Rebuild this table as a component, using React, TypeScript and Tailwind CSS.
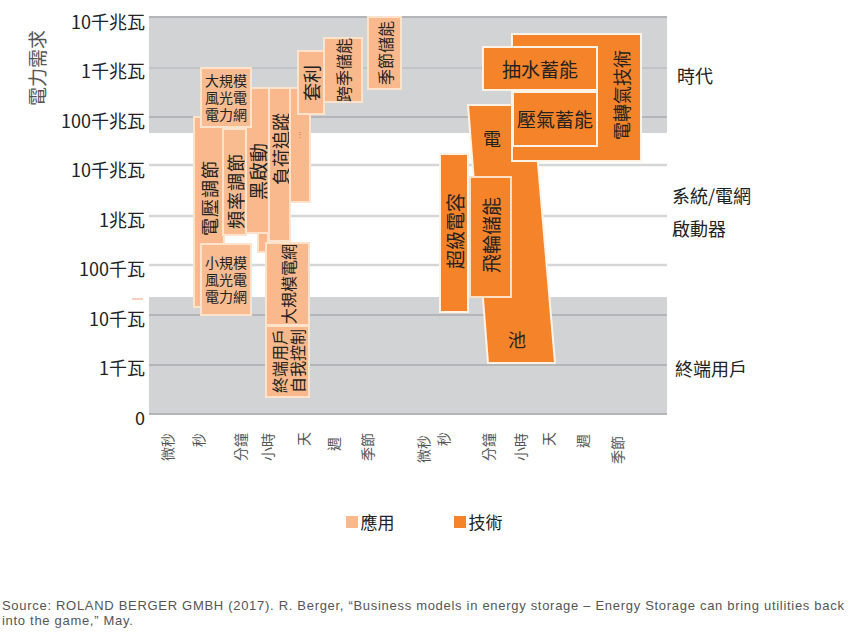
const side = "[writing-mode:vertical-rl] [text-orientation:sideways] rotate-180 whitespace-nowrap";

const yTicks = ["10千兆瓦", "1千兆瓦", "100千兆瓦", "10千兆瓦", "1兆瓦", "100千瓦", "10千瓦", "1千瓦", "0"];

export default function App() {
  return (
    <div className="w-[848px] h-[637px] bg-white flex flex-col font-['Noto_Sans_CJK_TC','Noto_Sans',sans-serif] text-[#222]">
      {/* Chart */}
      <div className="relative h-[500px] shrink-0">
        <svg className="absolute left-0 top-0" width="848" height="500">
          <rect x="149" y="16" width="518" height="117" fill="#d1d3d5" />
          <rect x="149" y="297" width="518" height="118" fill="#d1d3d5" />
          <line x1="149" y1="17" x2="667" y2="17" stroke="#a9abae" strokeWidth="1.5" />
          <line x1="149" y1="68" x2="667" y2="68" stroke="#b3b5b8" strokeWidth="1" />
          <line x1="149" y1="117" x2="667" y2="117" stroke="#a9abae" strokeWidth="1.5" />
          <line x1="149" y1="165" x2="667" y2="165" stroke="#d6d6d6" strokeWidth="2.5" />
          <line x1="149" y1="216" x2="667" y2="216" stroke="#d6d6d6" strokeWidth="2.5" />
          <line x1="149" y1="265" x2="667" y2="265" stroke="#d6d6d6" strokeWidth="2.5" />
          <line x1="149" y1="315" x2="667" y2="315" stroke="#a9abae" strokeWidth="1.5" />
          <line x1="149" y1="365" x2="667" y2="365" stroke="#a9abae" strokeWidth="1.5" />
          <line x1="149" y1="414" x2="667" y2="414" stroke="#a9abae" strokeWidth="1.5" />
          <line x1="132" y1="299" x2="143" y2="299" stroke="#f4a07a" strokeWidth="1" />
        </svg>

        {/* Y axis title */}
        <div className={`absolute left-[26px] top-[30px] text-[19px] leading-[22px] text-[#555] ${side}`}>電力需求</div>

        {/* Y axis labels */}
        <div className="absolute right-[703px] top-[-4px] flex flex-col items-end">
          {yTicks.map((t, i) => (
            <div key={i} className="h-[49.5px] flex items-center text-[18px] leading-[24px] whitespace-nowrap">
              {t}
            </div>
          ))}
        </div>

        {/* Right labels */}
        <div className="absolute left-[672px] top-[63px] flex flex-col text-[18px] leading-[24px]">
          <div className="pl-[5px]">時代</div>
          <div className="mt-[96px]">系統/電網</div>
          <div className="mt-[9px]">啟動器</div>
          <div className="mt-[116px] pl-[3px]">終端用戶</div>
        </div>

        {/* Application boxes */}
        <div className="absolute left-[193px] top-[116px] w-[32px] h-[192px] bg-[#f9b98c] border-2 border-[#fde2cc] flex flex-col items-center pt-[42px]">
          <span className={`text-[18px] leading-[20px] tracking-[1px] ${side}`}>電壓調節</span>
        </div>
        <div className="absolute left-[222px] top-[128px] w-[25px] h-[108px] bg-[#f9bb90] border-2 border-[#fde2cc] flex flex-col items-center pt-[23px]">
          <span className={`text-[18px] leading-[20px] tracking-[1px] ${side}`}>頻率調節</span>
        </div>
        <div className="absolute left-[257px] top-[150px] w-[12px] h-[103px] bg-[#f9b98c] border-2 border-[#fde2cc]" />
        <div className="absolute left-[245px] top-[87px] w-[25px] h-[147px] bg-[#f9b98c] border-2 border-[#fde2cc] flex flex-col items-center pt-[54px]">
          <span className={`text-[19px] leading-[21px] ${side}`}>黑啟動</span>
        </div>
        <div className="absolute left-[268px] top-[87px] w-[23px] h-[155px] bg-[#f9b98c] border-2 border-[#fde2cc] flex flex-col items-center pt-[24px]">
          <span className={`text-[18px] leading-[20px] ${side}`}>負荷追蹤</span>
        </div>
        <div className="absolute left-[289px] top-[87px] w-[22px] h-[116px] bg-[#f9b98c] border-2 border-[#fde2cc] flex flex-col items-center pt-[40px]">
          <span className="text-[8px] leading-[10px] text-[#c9734a]">⋮</span>
        </div>
        <div className="absolute left-[297px] top-[50px] w-[28px] h-[65px] bg-[#f9b98c] border-2 border-[#fde2cc] flex items-center justify-center">
          <span className={`text-[18px] leading-[20px] ${side}`}>套利</span>
        </div>
        <div className="absolute left-[323px] top-[37px] w-[40px] h-[66px] bg-[#f9b98c] border-2 border-[#fde2cc] flex items-center justify-center">
          <span className={`text-[16px] leading-[18px] ${side}`}>跨季儲能</span>
        </div>
        <div className="absolute left-[367px] top-[16px] w-[35px] h-[74px] bg-[#f9b98c] border-2 border-[#fde2cc] flex items-center justify-center">
          <span className={`text-[16px] leading-[18px] ${side}`}>季節儲能</span>
        </div>
        <div className="absolute left-[200px] top-[67px] w-[52px] h-[61px] bg-[#f9bb90] border-2 border-[#fde2cc] flex flex-col items-center justify-center text-[14px] leading-[17px]">
          <span>大規模</span>
          <span>風光電</span>
          <span>電力網</span>
        </div>
        <div className="absolute left-[200px] top-[243px] w-[52px] h-[73px] bg-[#f9bb90] border-2 border-[#fde2cc] flex flex-col items-center justify-center text-[14px] leading-[17px]">
          <span>小規模</span>
          <span>風光電</span>
          <span>電力網</span>
        </div>
        <div className="absolute left-[265px] top-[242px] w-[45px] h-[84px] bg-[#f9b98c] border-2 border-[#fde2cc] flex items-center justify-center">
          <span className={`text-[16px] leading-[18px] ${side}`}>大規模電網</span>
        </div>
        <div className="absolute left-[265px] top-[325px] w-[45px] h-[73px] bg-[#f9b98c] border-2 border-[#fde2cc] flex items-center justify-center">
          <span className={`text-[16px] leading-[18px] ${side}`}>終端用戶<br />自我控制</span>
        </div>

        {/* Technology: battery (slanted) */}
        <svg className="absolute left-[466px] top-[103px]" width="92" height="263">
          <polygon points="2,2 67,2 89,260 22,260" fill="#f5832a" stroke="#fff3e8" strokeWidth="2" />
        </svg>
        <div className="absolute left-[483px] top-[127px] text-[18px] leading-[22px]">電</div>
        <div className="absolute left-[508px] top-[328px] text-[18px] leading-[22px]">池</div>

        {/* Technology boxes */}
        <div className="absolute left-[511px] top-[33px] w-[131px] h-[129px] bg-[#f5832a] border-2 border-[#fff3e8] flex flex-col items-end pr-[9px] pt-[15px]">
          <span className={`text-[18px] leading-[20px] ${side}`}>電轉氣技術</span>
        </div>
        <div className="absolute left-[482px] top-[46px] w-[116px] h-[45px] bg-[#f5832a] border-2 border-[#fff3e8] flex items-center justify-center">
          <span className="text-[19px] leading-[22px]">抽水蓄能</span>
        </div>
        <div className="absolute left-[512px] top-[91px] w-[86px] h-[56px] bg-[#f5832a] border-2 border-[#fff3e8] flex items-center justify-center">
          <span className="text-[19px] leading-[22px]">壓氣蓄能</span>
        </div>
        <div className="absolute left-[439px] top-[153px] w-[30px] h-[160px] bg-[#f5832a] border-2 border-[#fff3e8] flex flex-col items-center pt-[38px]">
          <span className={`text-[19px] leading-[21px] ${side}`}>超級電容</span>
        </div>
        <div className="absolute left-[469px] top-[176px] w-[43px] h-[122px] bg-[#f5832a] border-2 border-[#fde0c6] flex flex-col items-center pt-[19px]">
          <span className={`text-[19px] leading-[21px] ${side}`}>飛輪儲能</span>
        </div>

        {/* X axis labels */}
        <div className="absolute left-[159px] top-[432px] flex items-start text-[14px] leading-[16px] text-[#555]">
          <span className={`mt-[1px] ${side}`}>微秒</span>
          <span className={`ml-[15px] mt-[1px] ${side}`}>秒</span>
          <span className={`ml-[26px] mt-[1px] ${side}`}>分鐘</span>
          <span className={`ml-[11px] mt-[1px] ${side}`}>小時</span>
          <span className={`ml-[20px] ${side}`}>天</span>
          <span className={`ml-[14px] mt-[5px] ${side}`}>週</span>
          <span className={`ml-[18px] mt-[1px] ${side}`}>季節</span>
          <span className={`ml-[40px] mt-[3px] ${side}`}>微秒</span>
          <span className={`ml-[4px] ${side}`}>秒</span>
          <span className={`ml-[29px] mt-[1px] ${side}`}>分鐘</span>
          <span className={`ml-[16px] mt-[1px] ${side}`}>小時</span>
          <span className={`ml-[12px] ${side}`}>天</span>
          <span className={`ml-[18px] mt-[2px] ${side}`}>週</span>
          <span className={`ml-[19px] mt-[4px] ${side}`}>季節</span>
        </div>
      </div>

      {/* Legend */}
      <div className="h-[44px] flex items-center justify-center gap-[59px] shrink-0">
        <div className="flex items-center gap-[3px]">
          <span className="w-[12px] h-[12px] bg-[#f9b98c]" />
          <span className="text-[17px] leading-[22px]">應用</span>
        </div>
        <div className="flex items-center gap-[3px]">
          <span className="w-[12px] h-[12px] bg-[#f5832a]" />
          <span className="text-[17px] leading-[22px]">技術</span>
        </div>
      </div>

      {/* Source */}
      <p className="mt-[54px] px-[2px] text-[13px] leading-[15px] text-[#555] font-['Liberation_Sans',sans-serif] tracking-[0.7px] whitespace-nowrap">
        Source: ROLAND BERGER GMBH (2017). R. Berger, “Business models in energy storage – Energy Storage can bring utilities back
        <br />
        into the game,” May.
      </p>
    </div>
  );
}
